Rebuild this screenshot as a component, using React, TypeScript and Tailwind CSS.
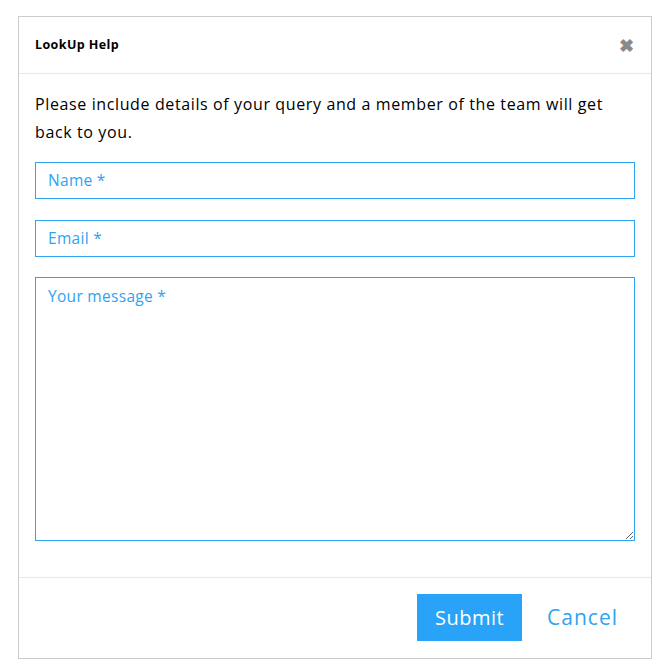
import React from "react";

export default function App() {
  const font = { fontFamily: '"Open Sans", "Liberation Sans", sans-serif' };
  return (
    <div className="w-[670px] h-[670px] bg-white pl-[18px] pt-[16px]" style={font}>
      <div className="w-[634px] h-[643px] border border-[#cccccc] flex flex-col">
        <div className="h-[57px] flex items-center justify-between px-[16px] border-b border-[#e8e8e8]">
          <span className="text-[12.5px] font-bold text-black tracking-[0.4px]">LookUp Help</span>
          <span className="text-[#8a8a8a] text-[18px] font-bold leading-none mr-[1px]">✖</span>
        </div>
        <div className="flex flex-col px-[16px] pt-[16px]">
          <p className="text-[16px] leading-[28px] text-black tracking-[0.62px]">
            Please include details of your query and a member of the team will get back to you.
          </p>
          <div className="mt-[16px] h-[37px] border border-[#2ea3f2] flex items-center px-[12px] text-[#2ea3f2] text-[15.5px] tracking-[0.3px]">
            Name *
          </div>
          <div className="mt-[21px] h-[37px] border border-[#2ea3f2] flex items-center px-[12px] text-[#2ea3f2] text-[15.5px] tracking-[0.3px]">
            Email *
          </div>
          <textarea
            className="mt-[20px] h-[264px] border border-[#2ea3f2] px-[12px] py-[7px] text-[#2ea3f2] text-[15.5px] tracking-[0.3px] placeholder:text-[#2ea3f2] outline-none resize-y"
            placeholder="Your message *"
            style={font}
          />
        </div>
        <div className="mt-[36px] border-t border-[#e8e8e8] flex-1 flex items-start justify-end pt-[16px] pr-[33px]">
          <button className="h-[47px] w-[105px] bg-[#29a3f7] text-white text-[20px] tracking-[0.5px]">Submit</button>
          <button className="h-[47px] ml-[25px] text-[#2ea3f2] text-[21px] tracking-[1px]">Cancel</button>
        </div>
      </div>
    </div>
  );
}
